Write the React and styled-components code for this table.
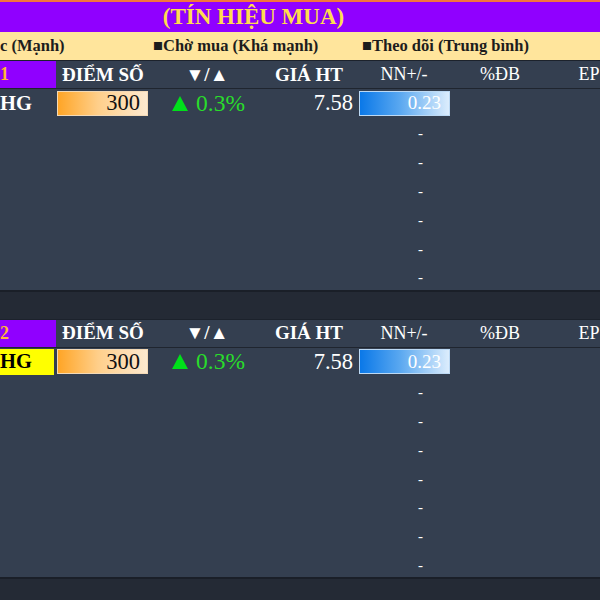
import styled, { createGlobalStyle } from "styled-components";

const GlobalStyle = createGlobalStyle`
  body {
    margin: 0;
    background: #242a35;
    font-family: "Liberation Serif", "Times New Roman", serif;
  }
`;

const COLS = "56px 94px 112px 94px 96px 96px 1fr";

const Page = styled.div`
  width: 600px;
  height: 600px;
  overflow: hidden;
  background: #242a35;
`;

const TitleBar = styled.div`
  height: 30px;
  border-top: 2px solid #f4743b;
  background: #9000ff;
  display: flex;
  align-items: center;
  justify-content: center;
  padding-right: 93px;
  color: #ffdc4e;
  font-weight: bold;
  font-size: 23px;
`;

const Legend = styled.div`
  height: 28px;
  background: #ffe59c;
  display: grid;
  grid-template-columns: 153px 209px 1fr;
  align-items: center;
  color: #1d1d1d;
  font-weight: bold;
  font-size: 16.5px;
  white-space: nowrap;
`;

const Section = styled.div`
  background: #343f50;
  border-top: 1px solid #1c222c;
  border-bottom: 2px solid #1a1f28;
`;

const Row = styled.div`
  display: grid;
  grid-template-columns: ${COLS};
  height: ${(p) => p.$h || 28.8}px;
  align-items: center;
  white-space: nowrap;
`;

const HeadRow = styled(Row)`
  border-bottom: 1px solid #1f252f;
  color: #ffffff;
  font-size: 19px;
`;

const Head = styled.div`
  text-align: center;
  font-weight: ${(p) => (p.$light ? "normal" : "bold")};
  font-size: ${(p) => (p.$light ? 18 : 19)}px;
  padding-left: ${(p) => p.$pl || 0}px;
`;

const RankCell = styled.div`
  align-self: stretch;
  background: #9000ff;
  color: #ffb534;
  font-weight: bold;
  font-size: 18px;
  display: flex;
  align-items: center;
`;

const Ticker = styled.div`
  align-self: stretch;
  margin: 1px 2px 1px 0;
  display: flex;
  align-items: center;
  font-weight: bold;
  font-size: 20.5px;
  background: ${(p) => (p.$hl ? "#ffff00" : "transparent")};
  color: ${(p) => (p.$hl ? "#000000" : "#ffffff")};
`;

const BarCell = styled.div`
  height: 25px;
  margin: 0 2px 0 ${(p) => p.$ml}px;
  box-sizing: border-box;
  display: flex;
  align-items: center;
  justify-content: flex-end;
  padding-right: ${(p) => p.$pr}px;
  font-size: ${(p) => p.$fs}px;
  color: ${(p) => p.$color};
  background: ${(p) => p.$bg};
  border: 1px solid ${(p) => p.$border};
`;

const Change = styled.div`
  display: flex;
  align-items: center;
  padding-left: 22px;
  gap: 8px;
  color: #29dc2b;
  font-size: 23.5px;
`;

const Up = styled.span`
  width: 0;
  height: 0;
  border-left: 8px solid transparent;
  border-right: 8px solid transparent;
  border-bottom: 15px solid #00e01a;
`;

const Price = styled.div`
  text-align: right;
  padding-right: 3px;
  color: #ffffff;
  font-size: 22.5px;
`;

const Dash = styled.div`
  text-align: right;
  padding-right: 29px;
  padding-top: 5px;
  color: #ffffff;
  font-size: 15px;
`;

const Gap = styled.div`
  height: 27px;
`;

const Block = ({ rank, hl, empties }) => (
  <Section>
    <HeadRow $h={27}>
      <RankCell>{rank}</RankCell>
      <Head>ĐIỂM SỐ</Head>
      <Head $pl={2}>▼/▲</Head>
      <Head>GIÁ HT</Head>
      <Head $light>NN+/-</Head>
      <Head $light>%ĐB</Head>
      <Head $light $pl={30}>EP</Head>
    </HeadRow>
    <Row $h={28}>
      <Ticker $hl={hl}>HG</Ticker>
      <BarCell
        $ml={1}
        $pr={7}
        $fs={22.5}
        $color="#111"
        $bg="linear-gradient(90deg, #ffa526 0%, #ffcf8a 45%, #fde9cf 100%)"
        $border="#f3d9b6"
      >
        300
      </BarCell>
      <Change>
        <Up />
        0.3%
      </Change>
      <Price>7.58</Price>
      <BarCell
        $ml={3}
        $pr={8}
        $fs={19}
        $color="#ffffff"
        $bg="linear-gradient(90deg, #0a78e8 0%, #5aa8f0 45%, #dcedfd 100%)"
        $border="#bcd9f4"
      >
        0.23
      </BarCell>
    </Row>
    {Array.from({ length: empties }).map((_, i) => (
      <Row key={i}>
        <div />
        <div />
        <div />
        <div />
        <Dash>-</Dash>
      </Row>
    ))}
  </Section>
);

export default function App() {
  return (
    <Page>
      <GlobalStyle />
      <TitleBar>(TÍN HIỆU MUA)</TitleBar>
      <Legend>
        <span>c (Mạnh)</span>
        <span>■Chờ mua (Khá mạnh)</span>
        <span>■Theo dõi (Trung bình)</span>
      </Legend>
      <Block rank="1" empties={6} />
      <Gap />
      <Block rank="2" hl empties={7} />
    </Page>
  );
}
